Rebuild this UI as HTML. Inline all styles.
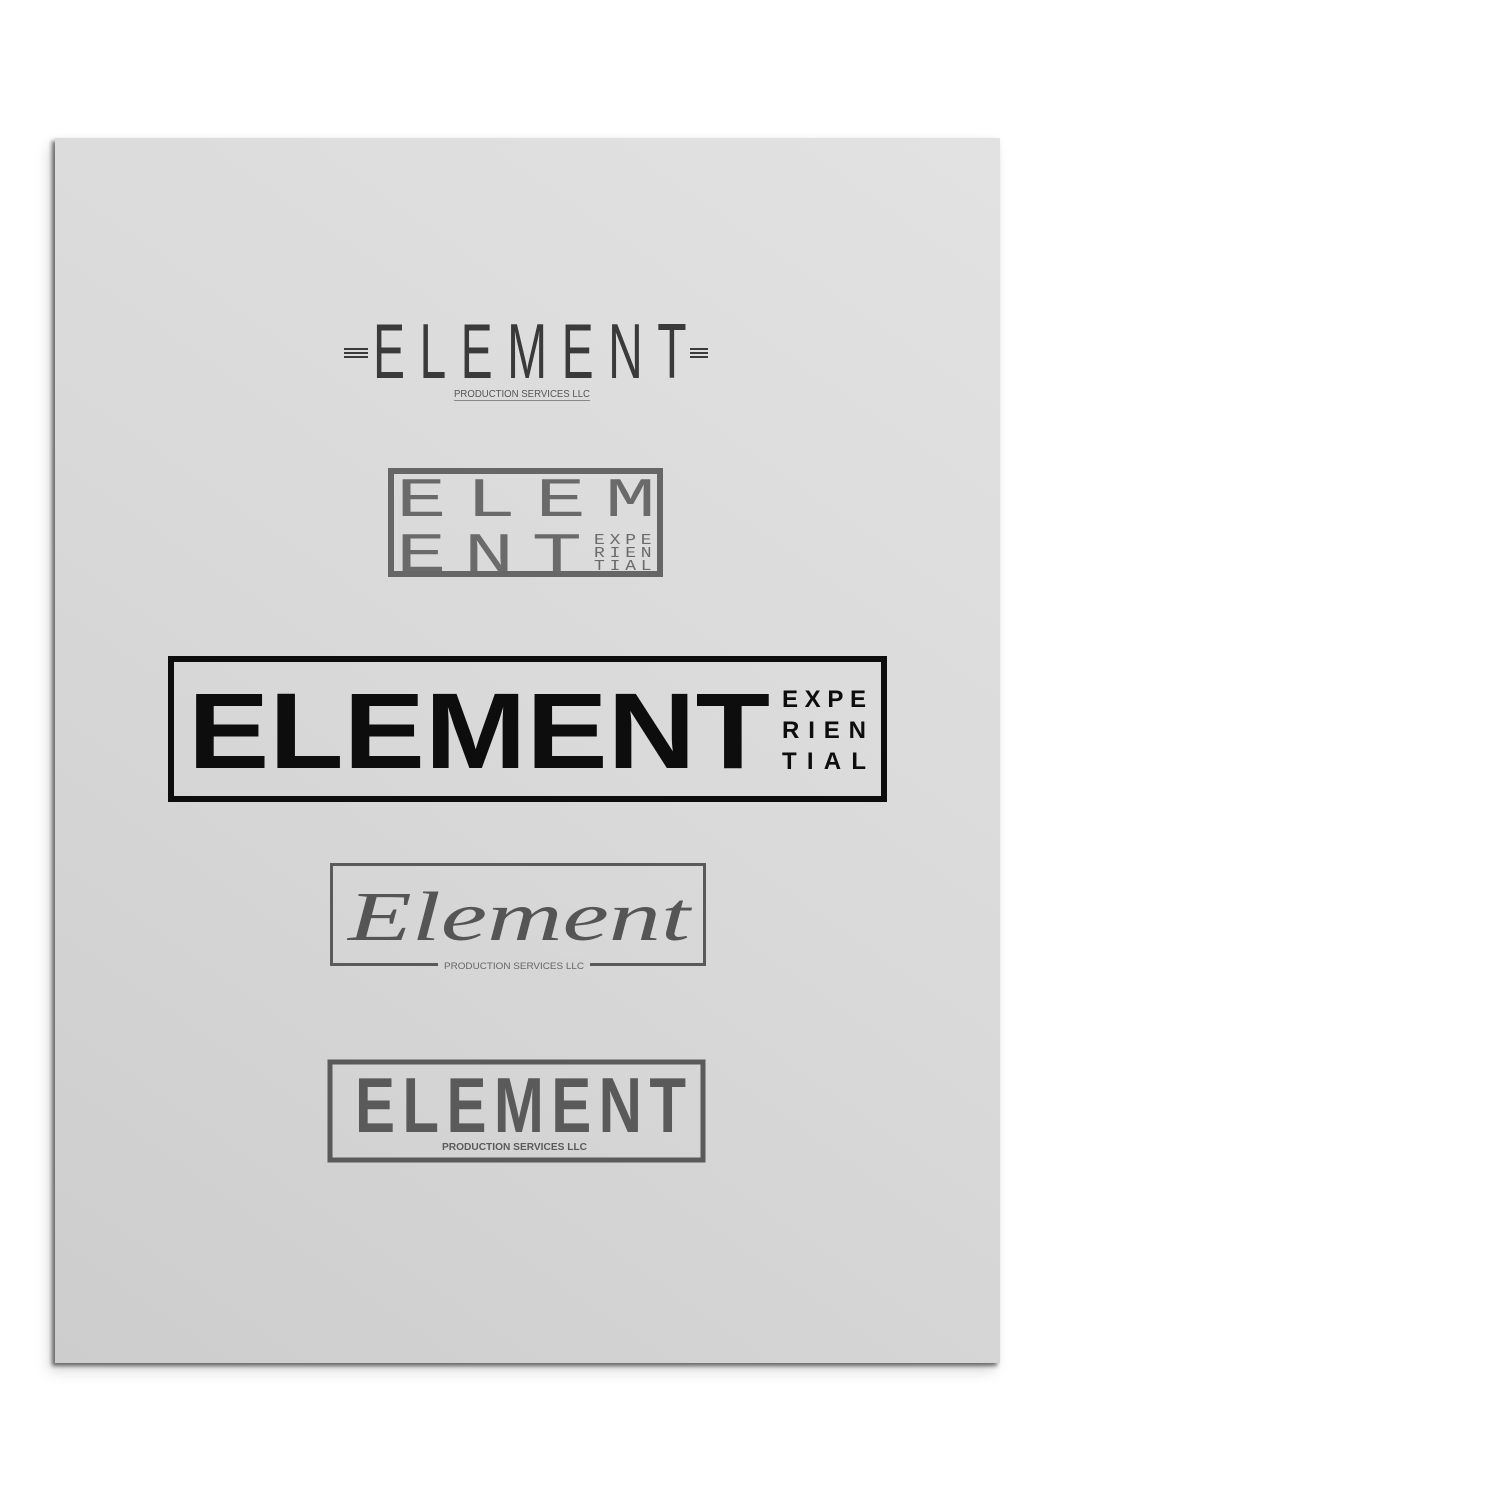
<!DOCTYPE html>
<html><head><meta charset="utf-8"><style>
html,body{margin:0;padding:0;background:#fff;width:1500px;height:1500px;overflow:hidden}
.paper{position:absolute;left:55px;top:138px;width:945px;height:1225px;
background:linear-gradient(35deg,#cdcdcd 0%,#d9d9d9 50%,#e2e2e2 100%);
box-shadow:-3px 3px 4px rgba(0,0,0,.55),-6px 8px 14px rgba(0,0,0,.15)}
svg{position:absolute;left:0;top:0}
</style></head><body>
<div class="paper"></div>
<svg width="1500" height="1500" viewBox="0 0 1500 1500" font-family="Liberation Sans, sans-serif">
<!-- Logo 1 -->
<g fill="#3a3a3a">
<rect x="344" y="348" width="24" height="2"/><rect x="344" y="352" width="24" height="2"/><rect x="344" y="356" width="24" height="2"/>
<rect x="690" y="348" width="18" height="2"/><rect x="690" y="352" width="18" height="2"/><rect x="690" y="356" width="18" height="2"/>
<text transform="translate(373,378) scale(0.8,1.3)" x="0" y="0" font-size="60" textLength="392" lengthAdjust="spacing">ELEMENT</text>
<text x="454" y="397" font-size="10" textLength="136" lengthAdjust="spacingAndGlyphs" fill="#555">PRODUCTION SERVICES LLC</text>
<rect x="454" y="400" width="136" height="1" fill="#888"/>
</g>
<!-- Logo 2 -->
<rect x="391" y="471" width="269" height="103" fill="none" stroke="#666" stroke-width="6"/>
<g fill="#6a6a6a" font-family="Liberation Mono, monospace">
<text transform="translate(396,516) scale(1.5,1)" font-size="56" textLength="173" lengthAdjust="spacing">ELEM</text>
<text transform="translate(396,571) scale(1.5,1)" font-size="56" textLength="124" lengthAdjust="spacing">ENT</text>
<text transform="translate(594,544) scale(1.2,1)" font-size="15" textLength="48" lengthAdjust="spacing">EXPE</text>
<text transform="translate(594,557) scale(1.2,1)" font-size="15" textLength="48" lengthAdjust="spacing">RIEN</text>
<text transform="translate(594,570) scale(1.2,1)" font-size="15" textLength="48" lengthAdjust="spacing">TIAL</text>
</g>
<!-- Logo 3 -->
<rect x="171" y="659" width="713" height="140" fill="none" stroke="#0d0d0d" stroke-width="6"/>
<g fill="#0d0d0d" font-weight="bold">
<text x="188" y="768" font-size="108" textLength="582" lengthAdjust="spacingAndGlyphs">ELEMENT</text>
<text x="782" y="707" font-size="24" textLength="84" lengthAdjust="spacing">EXPE</text>
<text x="782" y="738" font-size="24" textLength="84" lengthAdjust="spacing">RIEN</text>
<text x="782" y="769" font-size="24" textLength="84" lengthAdjust="spacing">TIAL</text>
</g>
<!-- Logo 4 -->
<rect x="331.5" y="864.5" width="373" height="100" fill="none" stroke="#5a5a5a" stroke-width="3"/>
<rect x="438" y="958" width="152" height="12" fill="#d6d6d6"/>
<text x="348" y="940" font-size="70" font-style="italic" font-family="Liberation Serif, serif" textLength="342" lengthAdjust="spacingAndGlyphs" fill="#555">Element</text>
<text x="444" y="969" font-size="9" textLength="140" lengthAdjust="spacingAndGlyphs" fill="#666">PRODUCTION SERVICES LLC</text>
<!-- Logo 5 -->
<rect x="330" y="1062" width="373" height="98" fill="none" stroke="#5a5a5a" stroke-width="5"/>
<g fill="#5a5a5a" font-weight="bold">
<text transform="translate(355,1132) scale(1,1.3)" font-size="60" textLength="331" lengthAdjust="spacing">ELEMENT</text>
<text x="442" y="1150" font-size="10" textLength="145" lengthAdjust="spacingAndGlyphs">PRODUCTION SERVICES LLC</text>
</g>
</svg>
</body></html>
